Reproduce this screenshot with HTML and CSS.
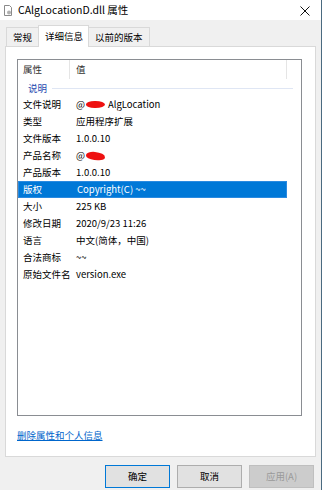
FILE: index.html
```html
<!DOCTYPE html>
<html lang="zh">
<head>
<meta charset="utf-8">
<link rel="stylesheet" href="styles.css">
</head>
<body>
<div class="window">
  <div class="titlebar">
    <svg class="ticon" width="10" height="11" viewBox="0 0 10 11">
      <path d="M1.5 0.5h5l2 2v8h-7z" fill="#fff" stroke="#8a8a8a"/>
      <circle cx="6" cy="7.5" r="2" fill="#b0b0b0"/>
    </svg>
    <span class="title">CAlgLocationD.dll 属性</span>
    <svg class="close" width="10" height="10" viewBox="0 0 10 10">
      <path d="M0.5 0.5L9.5 9.5M9.5 0.5L0.5 9.5" stroke="#111" stroke-width="1"/>
    </svg>
  </div>
  <div class="tabs">
    <div class="tab">常规</div>
    <div class="tab active">详细信息</div>
    <div class="tab">以前的版本</div>
  </div>
  <div class="panel">
    <div class="list">
      <div class="header">
        <div class="hcell c1">属性</div>
        <div class="hcell c2">值</div>
        <div class="hcell c3"></div>
      </div>
      <div class="group"><span class="gtext">说明</span><i class="gline"></i></div>
      <div class="row"><div class="k">文件说明</div><div class="v">@<span class="red r1"></span>AlgLocation</div></div>
      <div class="row"><div class="k">类型</div><div class="v">应用程序扩展</div></div>
      <div class="row"><div class="k">文件版本</div><div class="v">1.0.0.10</div></div>
      <div class="row"><div class="k">产品名称</div><div class="v">@<span class="red r2"></span></div></div>
      <div class="row"><div class="k">产品版本</div><div class="v">1.0.0.10</div></div>
      <div class="row sel"><div class="k">版权</div><div class="v">Copyright(C) ~~</div></div>
      <div class="row"><div class="k">大小</div><div class="v">225 KB</div></div>
      <div class="row"><div class="k">修改日期</div><div class="v">2020/9/23 11:26</div></div>
      <div class="row"><div class="k">语言</div><div class="v">中文(简体，中国)</div></div>
      <div class="row"><div class="k">合法商标</div><div class="v">~~</div></div>
      <div class="row"><div class="k">原始文件名</div><div class="v">version.exe</div></div>
    </div>
    <a class="link">删除属性和个人信息</a>
  </div>
  <div class="buttons">
    <div class="btn default">确定</div>
    <div class="btn">取消</div>
    <div class="btn disabled">应用(A)</div>
  </div>
</div>
</body>
</html>
```
FILE: styles.css
```css
html, body {
  margin: 0;
  padding: 0;
}
body {
  width: 322px;
  height: 490px;
  overflow: hidden;
  background: #4a6a80;
  font-family: "Noto Sans CJK SC", "Noto Sans", sans-serif;
  font-size: 9.5px;
  color: #000;
}
.window {
  width: 321px;
  height: 490px;
  background: #f0f0f0;
  display: flex;
  flex-direction: column;
}
.titlebar {
  height: 20px;
  background: #fff;
  display: flex;
  align-items: center;
  padding-left: 3px;
  box-sizing: border-box;
}
.ticon {
  margin-top: 1px;
}
.title {
  margin-left: 5px;
  font-size: 10.5px;
  color: #000;
  flex: 1;
  line-height: 20px;
}
.close {
  margin-right: 11px;
  margin-top: 1px;
}
.tabs {
  display: flex;
  align-items: flex-end;
  height: 26px;
  padding-left: 6px;
  box-sizing: border-box;
}
.tab {
  height: 18px;
  border: 1px solid #d9d9d9;
  border-bottom: none;
  background: #f0f0f0;
  line-height: 18px;
  padding: 0 6px;
  margin-right: -1px;
}
.tab.active {
  height: 21px;
  line-height: 20px;
  background: #fff;
  position: relative;
  z-index: 1;
  margin-bottom: -1px;
  padding: 0 5px 0 6px;
}
.panel {
  margin: 0 5px;
  height: 411px;
  box-sizing: border-box;
  border: 1px solid #d9d9d9;
  background: #fff;
  padding: 12px 13px 0 11px;
  display: flex;
  flex-direction: column;
}
.list {
  height: 357px;
  box-sizing: border-box;
  border: 1px solid #8a8d92;
  background: #fff;
}
.header {
  display: flex;
  height: 19px;
  line-height: 18px;
  color: #333;
}
.hcell {
  box-sizing: border-box;
}
.c1 {
  width: 52px;
  padding-left: 5px;
  border-right: 1px solid #e5e5e5;
}
.c2 {
  width: 217px;
  padding-left: 6px;
  border-right: 1px solid #e5e5e5;
}
.group {
  height: 17px;
  display: flex;
  align-items: center;
  padding-left: 10px;
  color: #2a4cb0;
  width: 265px;
}
.gtext {
  flex-shrink: 0;
  white-space: nowrap;
}
.gline {
  display: block;
  flex: 1;
  height: 1px;
  background: #dfe6f4;
  margin-left: 5px;
  margin-top: 1px;
}
.row {
  display: flex;
  height: 17px;
  line-height: 17px;
  width: 269px;
  white-space: nowrap;
}
.row .k {
  width: 52px;
  padding-left: 5px;
  box-sizing: border-box;
}
.row .v {
  padding-left: 6px;
  display: flex;
  align-items: center;
}
.row.sel {
  background: #0078d7;
  color: #fff;
  border: 1px solid #2b8ae0;
  box-sizing: border-box;
  line-height: 15px;
}
.row.sel .k {
  padding-left: 4px;
}
.red {
  display: inline-block;
  background: #ee1111;
  border-radius: 45% 50% 50% 45%;
}
.r1 {
  width: 19px;
  height: 7px;
  margin: -1px 3px 0 1px;
}
.r2 {
  width: 19px;
  height: 8px;
  margin-left: 1px;
  border-radius: 50% 60% 40% 50%;
  transform: rotate(5deg);
}
.link {
  margin-top: 12px;
  color: #0066cc;
  text-decoration: underline;
  line-height: 14px;
}
.buttons {
  display: flex;
  padding-left: 105px;
  gap: 7px;
  margin-top: 8px;
}
.btn {
  width: 65px;
  height: 23px;
  box-sizing: border-box;
  border: 1px solid #adadad;
  background: #e1e1e1;
  text-align: center;
  line-height: 21px;
}
.btn.default {
  border-color: #0078d7;
}
.btn.disabled {
  background: #cccccc;
  border-color: #bfbfbf;
  color: #9a9a9a;
}
```
